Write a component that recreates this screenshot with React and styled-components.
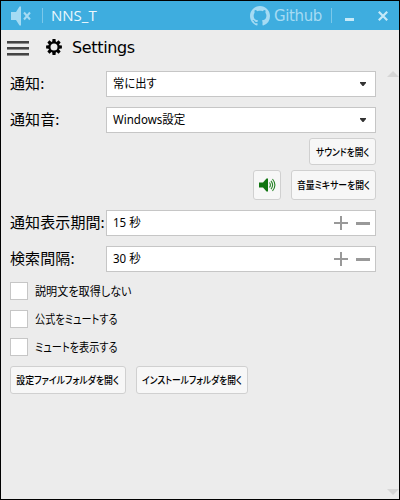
import React from "react";
import styled, { createGlobalStyle } from "styled-components";

const GlobalStyle = createGlobalStyle`
  * { box-sizing: border-box; }
  body { margin: 0; }
`;

const ui = `"Noto Sans", "Noto Sans CJK JP", sans-serif`;
const jp = `"Noto Sans CJK JP", sans-serif`;

const Window = styled.div`
  width: 400px;
  height: 500px;
  display: flex;
  flex-direction: column;
  background: #ececec;
  border: 1px solid #000;
  color: #000;
  font-family: ${ui};
  overflow: hidden;
`;

const TitleBar = styled.header`
  height: 29px;
  flex: none;
  display: flex;
  align-items: center;
  background: #3eaddf;
  color: #a5dbf3;
  padding: 0 11px 0 10px;
`;

const Divider = styled.i`
  width: 1px;
  height: 15px;
  background: #7bc8ea;
  margin-left: ${(p) => p.$left}px;
`;

const AppName = styled.span`
  margin-left: 8px;
  padding-bottom: 2px;
  font: 15px/26px "Open Sans", ${ui};
  color: #ecf8fd;
`;

const GithubLink = styled.span`
  display: flex;
  align-items: center;
  gap: 4px;
  margin-left: auto;
  font: 15px/28px "DejaVu Sans", sans-serif;
  letter-spacing: -0.35px;
`;

const WindowButton = styled.span`
  display: flex;
  margin-left: ${(p) => p.$left}px;
`;

const PageHeader = styled.div`
  height: 34px;
  flex: none;
  display: flex;
  align-items: center;
  padding-left: 6px;
`;

const Hamburger = styled.div`
  width: 22px;
  height: 15px;
  margin: 3px 17px 0 0;
  display: flex;
  flex-direction: column;
  justify-content: space-between;
`;

const Bar = styled.i`
  height: 3px;
  background: #444;
  border-bottom: 1px solid #8c8c8c;
`;

const Heading = styled.h1`
  margin: 2px 0 0 10px;
  font: 16px/32px "DejaVu Sans", sans-serif;
  letter-spacing: -0.35px;
`;

const Body = styled.main`
  flex: 1;
  display: flex;
  justify-content: space-between;
`;

const Form = styled.div`
  width: 366px;
  margin-left: 9px;
  padding-top: 7px;
  display: flex;
  flex-direction: column;
`;

const Row = styled.div`
  display: grid;
  grid-template-columns: 96px 270px;
  grid-template-rows: 26px;
  margin-bottom: ${(p) => p.$gap}px;
`;

const Label = styled.label`
  font: 15px/24px ${jp};
  letter-spacing: 0.1px;
  white-space: nowrap;
`;

const Field = styled.div`
  display: flex;
  align-items: center;
  justify-content: space-between;
  background: #fff;
  border: 1px solid #c6c6c6;
  padding: 0 ${(p) => p.$right}px 0 6px;
  font: 12px/24px ${ui};
`;

const Value = styled.span`
  font-feature-settings: "palt";
  transform: scaleX(${(p) => p.$squeeze || 1});
  transform-origin: left;
  white-space: nowrap;
`;

const ButtonRow = styled.div`
  display: flex;
  gap: 10px;
  justify-content: ${(p) => (p.$end ? "flex-end" : "flex-start")};
  margin-bottom: ${(p) => p.$gap || 0}px;
`;

const Button = styled.button`
  width: ${(p) => p.$width}px;
  height: ${(p) => p.$height}px;
  display: flex;
  align-items: center;
  justify-content: center;
  padding: 0;
  border: 1px solid #d0d0d0;
  border-radius: 3px;
  background: #f7f7f7;
  color: #000;
  font: 500 10px/20px ${jp};
  font-feature-settings: "palt";
  white-space: nowrap;
`;

const ButtonText = styled.span`
  transform: scaleX(${(p) => p.$squeeze});
`;

const CheckRow = styled.label`
  display: flex;
  align-items: center;
  gap: 7px;
  height: 18px;
  margin-bottom: 10px;
  font: 12px/18px ${jp};
`;

const Box = styled.i`
  width: 18px;
  height: 18px;
  background: #fff;
  border: 1px solid #c6c6c6;
`;

const ScrollArrows = styled.div`
  display: flex;
  flex-direction: column;
  justify-content: space-between;
  padding: 7px 0 4px;
`;

const Steppers = styled.span`
  display: flex;
  gap: 8px;
`;

const MutedIcon = () => (
  <svg width="21" height="20" viewBox="0 0 21 20">
    <path d="M0 6h5L8.500 0.500H10v19H8.500L5 14H0z" fill="#a5dbf3" />
    <path d="M13 6.500l6 7M19 6.500l-6 7" stroke="#a5dbf3" strokeWidth="2" />
  </svg>
);

const GithubIcon = () => (
  <svg width="20" height="20" viewBox="0 0 16 16" fill="#a5dbf3">
    <path d="M8 0C3.58 0 0 3.58 0 8c0 3.540 2.290 6.530 5.470 7.590.4.07.55-.17.55-.38 0-.19-.01-.82-.01-1.490-2.010.37-2.530-.49-2.690-.94-.09-.23-.48-.94-.82-1.130-.28-.15-.68-.52-.01-.53.63-.01 1.080.58 1.230.82.72 1.210 1.870.87 2.330.66.07-.52.28-.87.51-1.070-1.780-.2-3.640-.89-3.640-3.950 0-.87.31-1.590.82-2.150-.08-.2-.36-1.020.08-2.120 0 0 .67-.21 2.200.82.64-.18 1.320-.27 2-.27s1.360.09 2 .27c1.530-1.040 2.200-.82 2.200-.82.44 1.100.16 1.920.08 2.120.51.56.82 1.270.82 2.150 0 3.070-1.870 3.750-3.650 3.950.29.25.54.73.54 1.480 0 1.070-.01 1.930-.01 2.200 0 .21.15.46.55.38A8.010 8.010 0 0 0 16 8c0-4.420-3.580-8-8-8z" />
  </svg>
);

const GearIcon = () => (
  <svg width="16" height="16" viewBox="0 0 16 16">
    <circle cx="8" cy="8" r="4.600" fill="none" stroke="#000" strokeWidth="2.200" />
    {[0, 45, 90, 135, 180, 225, 270, 315].map((a) => (
      <path key={a} d="M6.500 0.100h3l.3 2.900H6.200z" transform={`rotate(${a} 8 8)`} />
    ))}
  </svg>
);

const SpeakerIcon = () => (
  <svg width="17" height="14" viewBox="0 0 17 14">
    <path d="M0 4.500h4L7.500 0.500H9v13H7.500L4 9.500H0z" fill="#107510" />
    <path d="M10.500 4.500q1.800 2.500 0 5M12 2.800q3.200 4.200 0 8.400M13.500 1q4.800 6 0 12" fill="none" stroke="#278327" strokeWidth="1.100" />
  </svg>
);

const Select = ({ label, value, gap, squeeze }) => (
  <Row $gap={gap}>
    <Label>{label}</Label>
    <Field $right={9}>
      <Value $squeeze={squeeze}>{value}</Value>
      <svg width="6" height="4" viewBox="0 0 6 4"><path d="M0 0h6v1L3.500 4h-1L0 1z" fill="#333" /></svg>
    </Field>
  </Row>
);

const NumberField = ({ label, value, gap }) => (
  <Row $gap={gap}>
    <Label>{label}</Label>
    <Field $right={5}>
      <Value $squeeze={0.96}>{value}</Value>
      <Steppers>
        <svg width="14" height="14" viewBox="0 0 14 14"><path d="M6 0h2v6h6v2H8v6H6V8H0V6h6z" fill="#999" /></svg>
        <svg width="14" height="14" viewBox="0 0 14 14"><path d="M0 6h14v3H0z" fill="#999" /></svg>
      </Steppers>
    </Field>
  </Row>
);

const CheckOption = ({ text, squeeze }) => (
  <CheckRow>
    <Box />
    <Value $squeeze={squeeze}>{text}</Value>
  </CheckRow>
);

const TextButton = ({ width, height, squeeze, children }) => (
  <Button $width={width} $height={height}>
    <ButtonText $squeeze={squeeze}>{children}</ButtonText>
  </Button>
);

export default function App() {
  return (
    <>
      <GlobalStyle />
      <Window>
        <TitleBar>
          <MutedIcon />
          <Divider $left={10} />
          <AppName>NNS_T</AppName>
          <GithubLink><GithubIcon /><span>Github</span></GithubLink>
          <Divider $left={9} />
          <WindowButton $left={13}>
            <svg width="9" height="10" viewBox="0 0 9 10"><path d="M0 7h9v3H0z" fill="#c5e9f8" /></svg>
          </WindowButton>
          <WindowButton $left={24}>
            <svg width="10" height="10" viewBox="0 0 10 10"><path d="M.8.8l8.400 8.400M9.200.8L.8 9.200" stroke="#c5e9f8" strokeWidth="2.200" /></svg>
          </WindowButton>
        </TitleBar>
        <PageHeader>
          <Hamburger><Bar /><Bar /><Bar /></Hamburger>
          <GearIcon />
          <Heading>Settings</Heading>
        </PageHeader>
        <Body>
          <Form>
            <Select label="通知:" value="常に出す" gap={10} squeeze={0.94} />
            <Select label="通知音:" value="Windows設定" gap={5} squeeze={0.96} />
            <ButtonRow $end $gap={5}>
              <TextButton width={67} height={27} squeeze={0.87}>サウンドを開く</TextButton>
            </ButtonRow>
            <ButtonRow $end $gap={10}>
              <Button $width={28} $height={30} aria-label="再生"><SpeakerIcon /></Button>
              <TextButton width={85} height={30} squeeze={0.88}>音量ミキサーを開く</TextButton>
            </ButtonRow>
            <NumberField label="通知表示期間:" value="15 秒" gap={10} />
            <NumberField label="検索間隔:" value="30 秒" gap={10} />
            <CheckOption text="説明文を取得しない" squeeze={0.925} />
            <CheckOption text="公式をミュートする" squeeze={0.845} />
            <CheckOption text="ミュートを表示する" squeeze={0.845} />
            <ButtonRow>
              <TextButton width={116} height={28} squeeze={0.89}>設定ファイルフォルダを開く</TextButton>
              <TextButton width={112} height={28} squeeze={0.875}>インストールフォルダを開く</TextButton>
            </ButtonRow>
          </Form>
          <ScrollArrows>
            <svg width="12" height="6" viewBox="0 0 12 6"><path d="M0 6L6 0l6 6z" fill="#d6d6d6" /></svg>
            <svg width="12" height="6" viewBox="0 0 12 6"><path d="M0 0h12L6 6z" fill="#d6d6d6" /></svg>
          </ScrollArrows>
        </Body>
      </Window>
    </>
  );
}
